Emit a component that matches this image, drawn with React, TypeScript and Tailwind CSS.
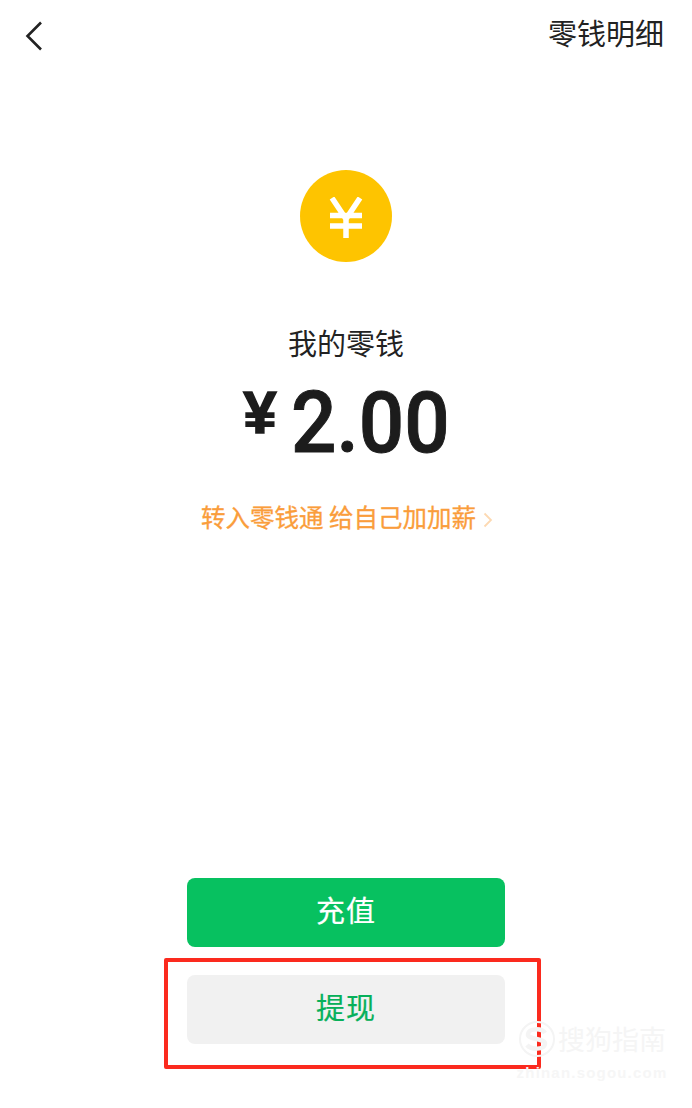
export default function App() {
  const cjk = { fontFamily: '"Noto Sans CJK SC", "Noto Sans", sans-serif' };
  return (
    <div className="relative w-[692px] h-[1108px] overflow-hidden bg-white flex flex-col items-center font-['Noto_Sans_CJK_SC',sans-serif]">
      <header className="w-full h-[68px] flex items-center justify-between pl-[24px] pr-[28px] shrink-0">
        <svg width="20" height="32" viewBox="0 0 20 32" fill="none" className="mt-[3px]">
          <path d="M17 2.5 L3.5 16 L17 29.5" stroke="#222222" strokeWidth="2.6" />
        </svg>
        <span className="text-[29px] leading-[40px] text-[#222222] -mt-[4px]">零钱明细</span>
      </header>

      <div className="mt-[102px] w-[92px] h-[92px] rounded-full bg-[#fec400] flex items-center justify-center shrink-0">
        <svg width="34" height="42" viewBox="0 0 34 42" fill="none" className="mt-[3px]">
          <path d="M3 1 L17 22 L31 1 M1 18.5 H33 M1 29 H33 M17 20 V41" stroke="#ffffff" strokeWidth="5.5" />
        </svg>
      </div>

      <p className="mt-[58px] text-[29px] leading-[44px] text-[#222222] tracking-[0px]">我的零钱</p>

      <div className="mt-[14px] h-[90px] flex items-center text-[#1c1c1c]">
        <span className="text-[60px] leading-[60px] font-bold mr-[14px] -mt-[20px] [-webkit-text-stroke:1.5px_#1c1c1c] font-['Liberation_Sans',sans-serif]">¥</span>
        <span className="block w-[158px] whitespace-nowrap origin-left scale-x-[0.93] text-[86px] leading-[90px] font-medium [-webkit-text-stroke:1px_#1c1c1c] font-['Roboto',sans-serif]">2.00</span>
      </div>

      <div className="mt-[29px] h-[40px] flex items-center text-[#fa9d3b] pl-[2px]">
        <span className="text-[24.5px] leading-[40px] whitespace-pre [-webkit-text-stroke:0.3px_#fa9d3b]" style={cjk}>转入零钱通 给自己加加薪</span>
        <svg width="10" height="16" viewBox="0 0 10 16" fill="none" className="ml-[7px] mt-[5px]">
          <path d="M1.5 1.5 L8 8 L1.5 14.5" stroke="#fdd9b2" strokeWidth="1.8" />
        </svg>
      </div>

      <div className="mt-auto mb-[64px] w-[318px] flex flex-col gap-[28px]">
        <button className="h-[69px] pb-[6px] rounded-[8px] bg-[#07c160] text-white text-[29px] tracking-[1px] [-webkit-text-stroke:0.2px_#ffffff]">充值</button>
        <button className="h-[69px] pb-[6px] rounded-[8px] bg-[#f1f1f1] text-[#07b05a] text-[29px] tracking-[1px] [-webkit-text-stroke:0.2px_#07b05a]">提现</button>
      </div>

      <div className="absolute left-[164px] top-[958px] w-[377px] h-[111px] border-[4px] border-[#fb2a1e] rounded-[2px]" />

      <div className="absolute left-[514px] top-[1020px] w-[156px] flex flex-col items-center text-white">
        <div className="flex items-center gap-[2px]">
          <svg width="38" height="38" viewBox="0 0 38 38" fill="none">
            <circle cx="19" cy="19" r="17" stroke="#f4f4f4" strokeWidth="2" />
            <path d="M27 13 C24 8 11 8 10 14 C9 20 28 18 27 24 C26 30 13 30 9 25" stroke="#f4f4f4" strokeWidth="4.5" />
          </svg>
          <span className="text-[27px] leading-[38px] text-[#f5f5f5]">搜狗指南</span>
        </div>
        <span className="text-[15px] leading-[18px] mt-[6px] font-bold tracking-[1.2px] text-[#f6f6f6] font-['Liberation_Sans',sans-serif]">zhinan.sogou.com</span>
      </div>
    </div>
  );
}
